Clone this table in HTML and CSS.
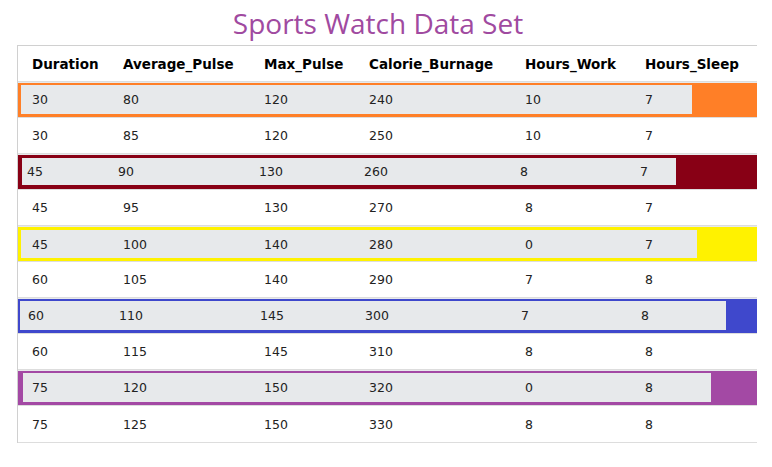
FILE: index.html
```html
<!DOCTYPE html>
<html>
<head>
<meta charset="utf-8">
<link rel="stylesheet" href="styles.css">
</head>
<body>
<h1 class="title">Sports Watch Data Set</h1>
<div class="table">
  <div class="row head">
    <div class="cells">
      <span class="c1">Duration</span><span class="c2">Average_Pulse</span><span class="c3">Max_Pulse</span><span class="c4">Calorie_Burnage</span><span class="c5">Hours_Work</span><span class="c6">Hours_Sleep</span>
    </div>
  </div>
  <div class="row hl orange">
    <div class="cells">
      <span class="c1">30</span><span class="c2">80</span><span class="c3">120</span><span class="c4">240</span><span class="c5">10</span><span class="c6">7</span>
    </div>
  </div>
  <div class="row">
    <div class="cells">
      <span class="c1">30</span><span class="c2">85</span><span class="c3">120</span><span class="c4">250</span><span class="c5">10</span><span class="c6">7</span>
    </div>
  </div>
  <div class="row hl darkred">
    <div class="cells">
      <span class="c1">45</span><span class="c2">90</span><span class="c3">130</span><span class="c4">260</span><span class="c5">8</span><span class="c6">7</span>
    </div>
  </div>
  <div class="row">
    <div class="cells">
      <span class="c1">45</span><span class="c2">95</span><span class="c3">130</span><span class="c4">270</span><span class="c5">8</span><span class="c6">7</span>
    </div>
  </div>
  <div class="row hl yellow">
    <div class="cells">
      <span class="c1">45</span><span class="c2">100</span><span class="c3">140</span><span class="c4">280</span><span class="c5">0</span><span class="c6">7</span>
    </div>
  </div>
  <div class="row">
    <div class="cells">
      <span class="c1">60</span><span class="c2">105</span><span class="c3">140</span><span class="c4">290</span><span class="c5">7</span><span class="c6">8</span>
    </div>
  </div>
  <div class="row hl blue">
    <div class="cells">
      <span class="c1">60</span><span class="c2">110</span><span class="c3">145</span><span class="c4">300</span><span class="c5">7</span><span class="c6">8</span>
    </div>
  </div>
  <div class="row">
    <div class="cells">
      <span class="c1">60</span><span class="c2">115</span><span class="c3">145</span><span class="c4">310</span><span class="c5">8</span><span class="c6">8</span>
    </div>
  </div>
  <div class="row hl purple">
    <div class="cells">
      <span class="c1">75</span><span class="c2">120</span><span class="c3">150</span><span class="c4">320</span><span class="c5">0</span><span class="c6">8</span>
    </div>
  </div>
  <div class="row">
    <div class="cells">
      <span class="c1">75</span><span class="c2">125</span><span class="c3">150</span><span class="c4">330</span><span class="c5">8</span><span class="c6">8</span>
    </div>
  </div>
</div>
</body>
</html>
```
FILE: styles.css
```css
html, body {
  margin: 0;
  padding: 0;
  background: #ffffff;
}

.title {
  width: 756px;
  margin: 0;
  padding-top: 6px;
  height: 39px;
  text-align: center;
  font-family: "Open Sans", "Noto Sans", sans-serif;
  font-weight: 400;
  font-size: 28px;
  line-height: 34px;
  color: #a04aa0;
}

.table {
  margin-left: 17px;
  width: 739px;
  border-left: 1px solid #d0d0d0;
  border-top: 1px solid #d0d0d0;
  font-family: "DejaVu Sans", Verdana, sans-serif;
  font-size: 12.5px;
  color: #222;
}

.row {
  height: 35px;
  border-bottom: 1px solid #dddddd;
  display: flex;
  align-items: stretch;
  box-sizing: content-box;
}

.row:last-child {
  height: 36px;
}

.cells {
  display: flex;
  align-items: center;
  padding-left: 14px;
  flex: 1;
}

.head .cells {
  font-weight: bold;
  font-size: 13.5px;
  color: #000;
}

.c1 { width: 91px; flex: none; }
.c2 { width: 141px; flex: none; }
.c3 { width: 105px; flex: none; }
.c4 { width: 156px; flex: none; }
.c5 { width: 120px; flex: none; }
.c6 { flex: 1; }

.hl {
  background: #e7e9eb;
  box-sizing: border-box;
  height: 36px;
}

.hl .cells {
  background: #e7e9eb;
  flex: none;
}

.orange {
  background: #ff7f27;
  padding: 2px 0 3px 3px;
  border-top: 1px solid #e7e9eb;
}
.orange .cells { width: 671px; padding-left: 11px; box-sizing: border-box; }

.darkred {
  background: #880015;
  padding: 3px 0 4px 4px;
  border-top: 1px solid #e7e9eb;
}
.darkred .cells { width: 654px; padding-left: 5px; box-sizing: border-box; }

.yellow {
  background: #fff200;
  padding: 3px 0 3px 3px;
  border-top: 1px solid #e7e9eb;
}
.yellow .cells { width: 676px; padding-left: 11px; box-sizing: border-box; }

.blue {
  background: #3f48cc;
  padding: 2px 0 3px 2px;
  border-top: 1px solid #e7e9eb;
}
.blue .cells { width: 706px; padding-left: 8px; box-sizing: border-box; }

.purple {
  background: #a349a4;
  padding: 2px 0 3px 5px;
  border-top: 1px solid #e7e9eb;
}
.purple .cells { width: 688px; padding-left: 9px; box-sizing: border-box; }
```
